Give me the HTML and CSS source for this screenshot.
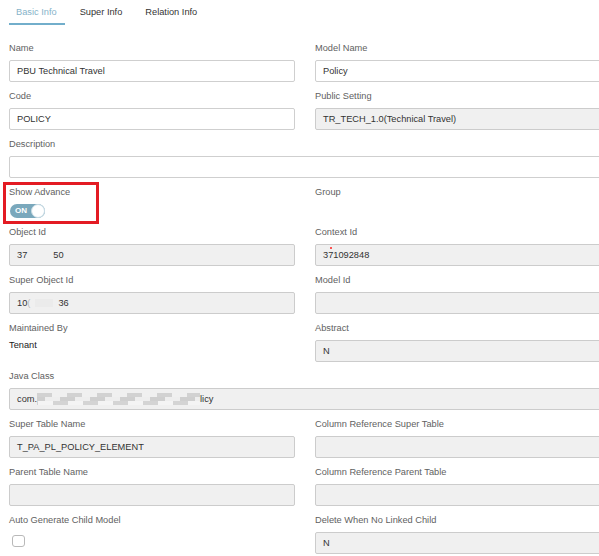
FILE: index.html
```html
<!DOCTYPE html>
<html>
<head>
<meta charset="utf-8">
<link rel="stylesheet" href="styles.css">
</head>
<body>
<div class="page">
  <div class="tabs">
    <div class="tab active">Basic Info</div>
    <div class="tab">Super Info</div>
    <div class="tab">Relation Info</div>
  </div>
  <div class="form">
    <div class="field">
      <div class="label">Name</div>
      <div class="input">PBU Technical Travel</div>
    </div>
    <div class="field">
      <div class="label">Model Name</div>
      <div class="input">Policy</div>
    </div>
    <div class="field">
      <div class="label">Code</div>
      <div class="input">POLICY</div>
    </div>
    <div class="field">
      <div class="label">Public Setting</div>
      <div class="input disabled">TR_TECH_1.0(Technical Travel)</div>
    </div>
    <div class="field wide">
      <div class="label">Description</div>
      <div class="input"></div>
    </div>
    <div class="field advance">
      <div class="label">Show Advance</div>
      <div class="toggle"><span class="toggle-text">ON</span><span class="knob"></span></div>
      <div class="highlight"></div>
    </div>
    <div class="field">
      <div class="label">Group</div>
    </div>
    <div class="field">
      <div class="label">Object Id</div>
      <div class="input disabled">37<span class="gap gap-obj"></span>50</div>
    </div>
    <div class="field context">
      <div class="label">Context Id</div>
      <div class="input disabled">371092848</div>
      <span class="red-dot"></span>
    </div>
    <div class="field">
      <div class="label">Super Object Id</div>
      <div class="input disabled">10<span class="faint">(</span><span class="gap gap-sup"></span>36</div>
    </div>
    <div class="field">
      <div class="label">Model Id</div>
      <div class="input disabled"></div>
    </div>
    <div class="field">
      <div class="label">Maintained By</div>
      <div class="plain">Tenant</div>
    </div>
    <div class="field">
      <div class="label">Abstract</div>
      <div class="input disabled">N</div>
    </div>
    <div class="field wide">
      <div class="label">Java Class</div>
      <div class="input disabled">com.<span class="mask"></span>licy</div>
    </div>
    <div class="field">
      <div class="label">Super Table Name</div>
      <div class="input disabled">T_PA_PL_POLICY_ELEMENT</div>
    </div>
    <div class="field">
      <div class="label">Column Reference Super Table</div>
      <div class="input disabled"></div>
    </div>
    <div class="field">
      <div class="label">Parent Table Name</div>
      <div class="input disabled"></div>
    </div>
    <div class="field">
      <div class="label">Column Reference Parent Table</div>
      <div class="input disabled"></div>
    </div>
    <div class="field">
      <div class="label">Auto Generate Child Model</div>
      <div class="checkbox-row"><span class="checkbox"></span></div>
    </div>
    <div class="field">
      <div class="label">Delete When No Linked Child</div>
      <div class="input disabled">N</div>
    </div>
  </div>
</div>
</body>
</html>
```
FILE: styles.css
```css
html, body {
  margin: 0;
  padding: 0;
  overflow: hidden;
  background: #ffffff;
}
body {
  font-family: "Liberation Sans", Arial, sans-serif;
  font-size: 9.25px;
  color: #333333;
}
.page {
  box-sizing: border-box;
  width: 599px;
  height: 556px;
  padding-left: 9px;
  overflow: hidden;
}
.tabs {
  display: flex;
  gap: 8px;
}
.tab {
  padding: 4px 8px 3px 7px;
  line-height: 16px;
  border-bottom: 2px solid transparent;
  color: #333333;
}
.tab.active {
  color: #86b3c9;
  border-bottom-color: #72aecb;
}
.form {
  margin-top: 15px;
  display: grid;
  grid-template-columns: 286px 286px;
  column-gap: 20px;
  row-gap: 6px;
  align-items: start;
}
.field {
  display: flex;
  flex-direction: column;
}
.field.wide {
  grid-column: 1 / span 2;
}
.label {
  line-height: 16px;
  color: #616161;
  margin-bottom: 4px;
}
.input {
  box-sizing: border-box;
  height: 22px;
  line-height: 20px;
  border: 1px solid #cfcfcf;
  border-radius: 2px;
  padding: 0 7px;
  background: #ffffff;
  color: #333333;
  white-space: nowrap;
  display: flex;
  align-items: center;
}
.input.disabled {
  background: #f0f0f0;
  border-color: #cccccc;
}
.gap {
  display: inline-block;
  height: 10px;
}
.gap-obj {
  width: 26px;
}
.gap-sup {
  width: 18px;
  height: 8px;
  margin: 0 5px 0 5px;
  background: #ebebeb;
}
.faint {
  color: #b8b8b8;
}
.mask {
  display: inline-block;
  width: 163px;
  height: 12px;
  background-image:
    linear-gradient(90deg, #d2d2d2 50%, #f0f0f0 50%),
    linear-gradient(90deg, #eeeeee 50%, #cfcfcf 50%),
    linear-gradient(90deg, #d4d4d4 50%, #f4f4f4 50%);
  background-size: 30px 4px, 30px 4px, 30px 4px;
  background-position: 0 0, 8px 4px, 16px 8px;
  background-repeat: repeat-x;
}
.plain {
  line-height: 16px;
  margin-top: -3px;
  color: #222222;
}
.advance {
  position: relative;
}
.toggle {
  box-sizing: border-box;
  width: 35px;
  height: 14px;
  border-radius: 7px;
  background: #7aa8bc;
  display: flex;
  align-items: center;
  justify-content: space-between;
  padding-left: 5px;
  margin-left: 1px;
}
.toggle-text {
  color: #ffffff;
  font-size: 8px;
  font-weight: bold;
  line-height: 10px;
}
.knob {
  box-sizing: border-box;
  width: 14px;
  height: 14px;
  border-radius: 50%;
  background: #ffffff;
  border: 1px solid #c9dce5;
}
.highlight {
  position: absolute;
  left: -6px;
  top: -2px;
  width: 90px;
  height: 36px;
  border: 3px solid #e31b23;
}
.context {
  position: relative;
}
.red-dot {
  position: absolute;
  left: 15px;
  top: 23px;
  width: 2px;
  height: 2px;
  border-radius: 1px;
  background: #ff2020;
}
.checkbox-row {
  height: 22px;
  display: flex;
  align-items: flex-start;
}
.checkbox {
  box-sizing: border-box;
  width: 13px;
  height: 12px;
  margin-left: 3px;
  margin-top: 3px;
  border: 1px solid #b9b9b9;
  border-radius: 3px;
  background: #ffffff;
}
```
